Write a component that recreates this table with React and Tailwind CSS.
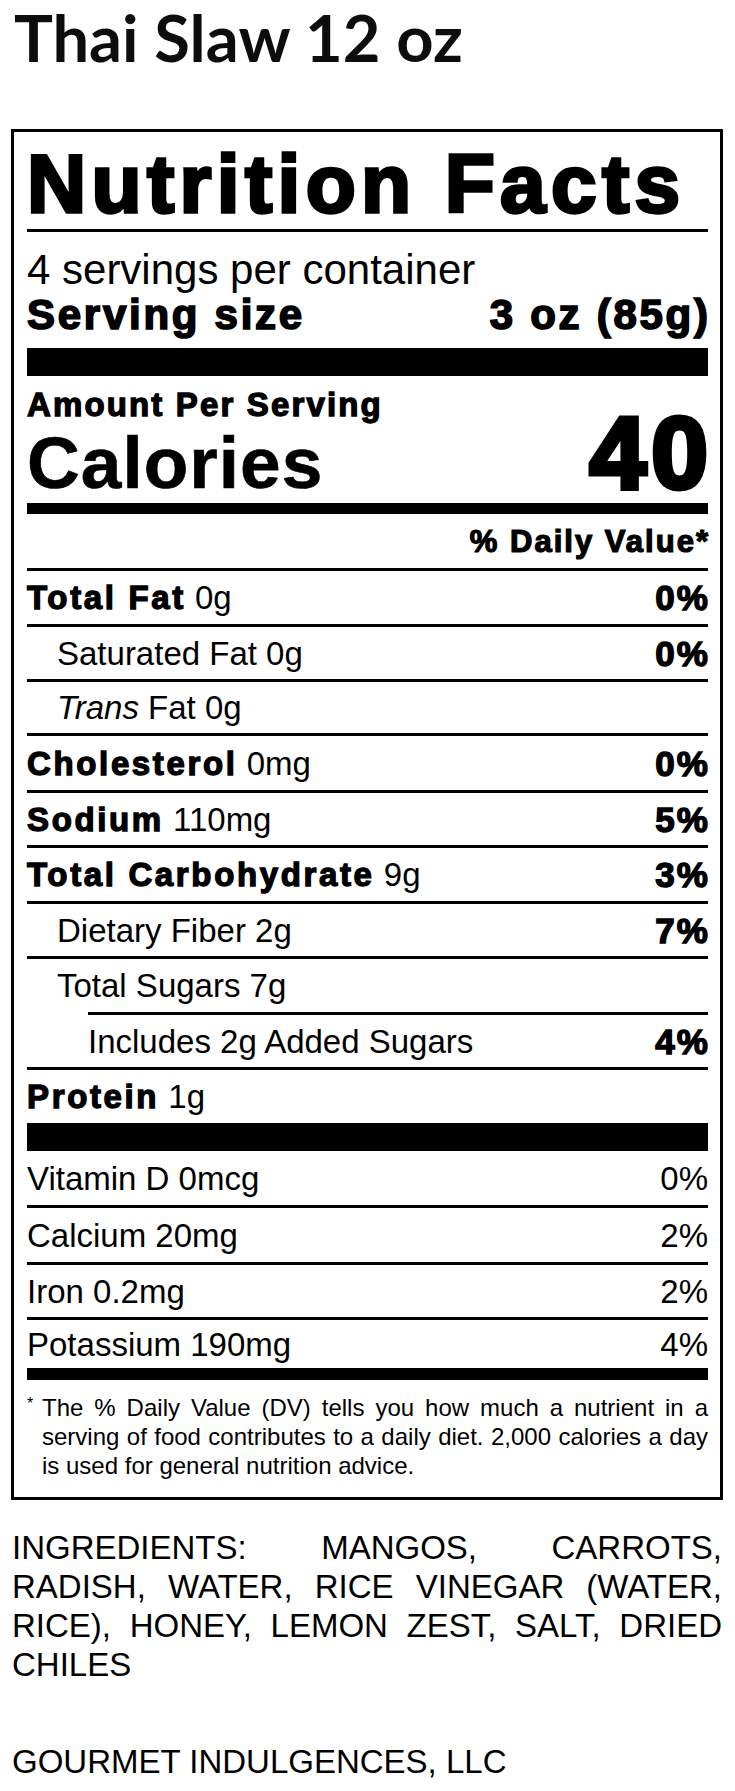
const label = "font-['Liberation_Sans',Arial,sans-serif]";
const heavy = 'font-bold tracking-[0.065em] [-webkit-text-stroke:0.04em_black]';
const heavyRow = 'font-bold tracking-[0.08em] [-webkit-text-stroke:0.04em_black]';
const heavyPct = 'text-[35px] font-bold tracking-[0.06em] -mr-[0.06em] [-webkit-text-stroke:0.04em_black]';

const rows = [
  { h: 'h-[56px]', name: 'Total Fat', amt: '0g', dv: '0%', bold: true },
  { h: 'h-[55px]', name: 'Saturated Fat 0g', dv: '0%', indent: 1 },
  { h: 'h-[54px]', trans: true, indent: 1 },
  { h: 'h-[57px]', name: 'Cholesterol', amt: '0mg', dv: '0%', bold: true },
  { h: 'h-[55px]', name: 'Sodium', amt: '110mg', dv: '5%', bold: true },
  { h: 'h-[56px]', name: 'Total Carbohydrate', amt: '9g', dv: '3%', bold: true },
  { h: 'h-[55px]', name: 'Dietary Fiber 2g', dv: '7%', indent: 1 },
  { h: 'h-[56px]', name: 'Total Sugars 7g', indent: 1 },
  { h: 'h-[55px]', name: 'Includes 2g Added Sugars', dv: '4%', indent: 2 },
  { h: 'h-[56px]', name: 'Protein', amt: '1g', bold: true },
];

const vitamins = [
  { h: 'h-[54px]', name: 'Vitamin D 0mcg', dv: '0%', first: true },
  { h: 'h-[57px]', name: 'Calcium 20mg', dv: '2%' },
  { h: 'h-[55px]', name: 'Iron 0.2mg', dv: '2%' },
  { h: 'h-[51px]', name: 'Potassium 190mg', dv: '4%' },
];

function NutrientRow({ row }) {
  const indent = row.indent === 1 ? 'pl-[30px]' : '';
  const outer = row.indent === 2 ? 'ml-[61px]' : '';
  return (
    <div className={`${row.h} ${outer} ${indent} flex items-center justify-between border-t-[3px] border-black text-[33px] leading-none`}>
      <div>
        {row.trans ? (
          <span><i>Trans</i> Fat 0g</span>
        ) : row.bold ? (
          <span><span className={heavyRow}>{row.name}</span> {row.amt}</span>
        ) : (
          <span>{row.name}</span>
        )}
      </div>
      {row.dv && <span className={heavyPct}>{row.dv}</span>}
    </div>
  );
}

export default function App() {
  return (
    <div className="w-[735px] min-h-[1791px] bg-white text-black">
      <h1 className="-mt-[3px] pl-[14px] font-['Lato',sans-serif] text-[65px] font-bold leading-[80px] text-[#0d0d0d]">
        Thai Slaw 12 oz
      </h1>

      <div className={`${label} mt-[52px] ml-[11px] w-[712px] border-[3px] border-black pl-[13px] pr-[12px] pt-[11px] pb-[17px]`}>
        <div className="border-b-[3px] border-black pb-[4px]">
          <div className={`${heavy} text-[82px] leading-none`}>Nutrition Facts</div>
        </div>

        <div className="mt-[17px] text-[42px] leading-none">4 servings per container</div>
        <div className={`${heavy} mt-[3px] flex justify-between text-[42px] leading-none`}>
          <span>Serving size</span>
          <span className="-mr-[0.065em]">3 oz (85g)</span>
        </div>

        <div className="mt-[12px] h-[28px] bg-black" />

        <div className={`${heavy} mt-[12px] text-[33px] leading-none`}>Amount Per Serving</div>
        <div className={`${heavy} flex items-baseline justify-between`}>
          <span className="text-[73px] leading-none">Calories</span>
          <span className="-mr-[0.05em] text-[102px] leading-[65px] tracking-[0.05em] [-webkit-text-stroke:0.05em_black]">40</span>
        </div>

        <div className="mt-[4px] h-[11px] bg-black" />

        <div className={`${heavy} mt-[12px] text-right text-[31px] leading-none`}>
          <span className="-mr-[0.065em]">% Daily Value*</span>
        </div>

        <div className="mt-[11px]">
          {rows.map((row, i) => (
            <NutrientRow key={i} row={row} />
          ))}
        </div>

        <div className="h-[28px] bg-black" />

        {vitamins.map((v, i) => (
          <div
            key={i}
            className={`${v.h} flex items-center justify-between text-[33px] leading-none ${v.first ? '' : 'border-t-[3px] border-black'}`}
          >
            <span>{v.name}</span>
            <span>{v.dv}</span>
          </div>
        ))}

        <div className="h-[12px] bg-black" />

        <div className="mt-[13px] flex">
          <span className="w-[15px] shrink-0 pt-[3px] text-[16px] leading-none">*</span>
          <p className="text-justify text-[24px] leading-[29px]">
            The % Daily Value (DV) tells you how much a nutrient in a serving of food contributes to a daily diet. 2,000 calories a day is used for general nutrition advice.
          </p>
        </div>
      </div>

      <p className={`${label} mt-[28px] ml-[12px] w-[710px] text-justify text-[33px] leading-[39px]`}>
        INGREDIENTS: MANGOS, CARROTS, RADISH, WATER, RICE VINEGAR (WATER, RICE), HONEY, LEMON ZEST, SALT, DRIED CHILES
      </p>

      <p className={`${label} mt-[61px] ml-[12px] text-[33px] leading-none`}>GOURMET INDULGENCES, LLC</p>
    </div>
  );
}
